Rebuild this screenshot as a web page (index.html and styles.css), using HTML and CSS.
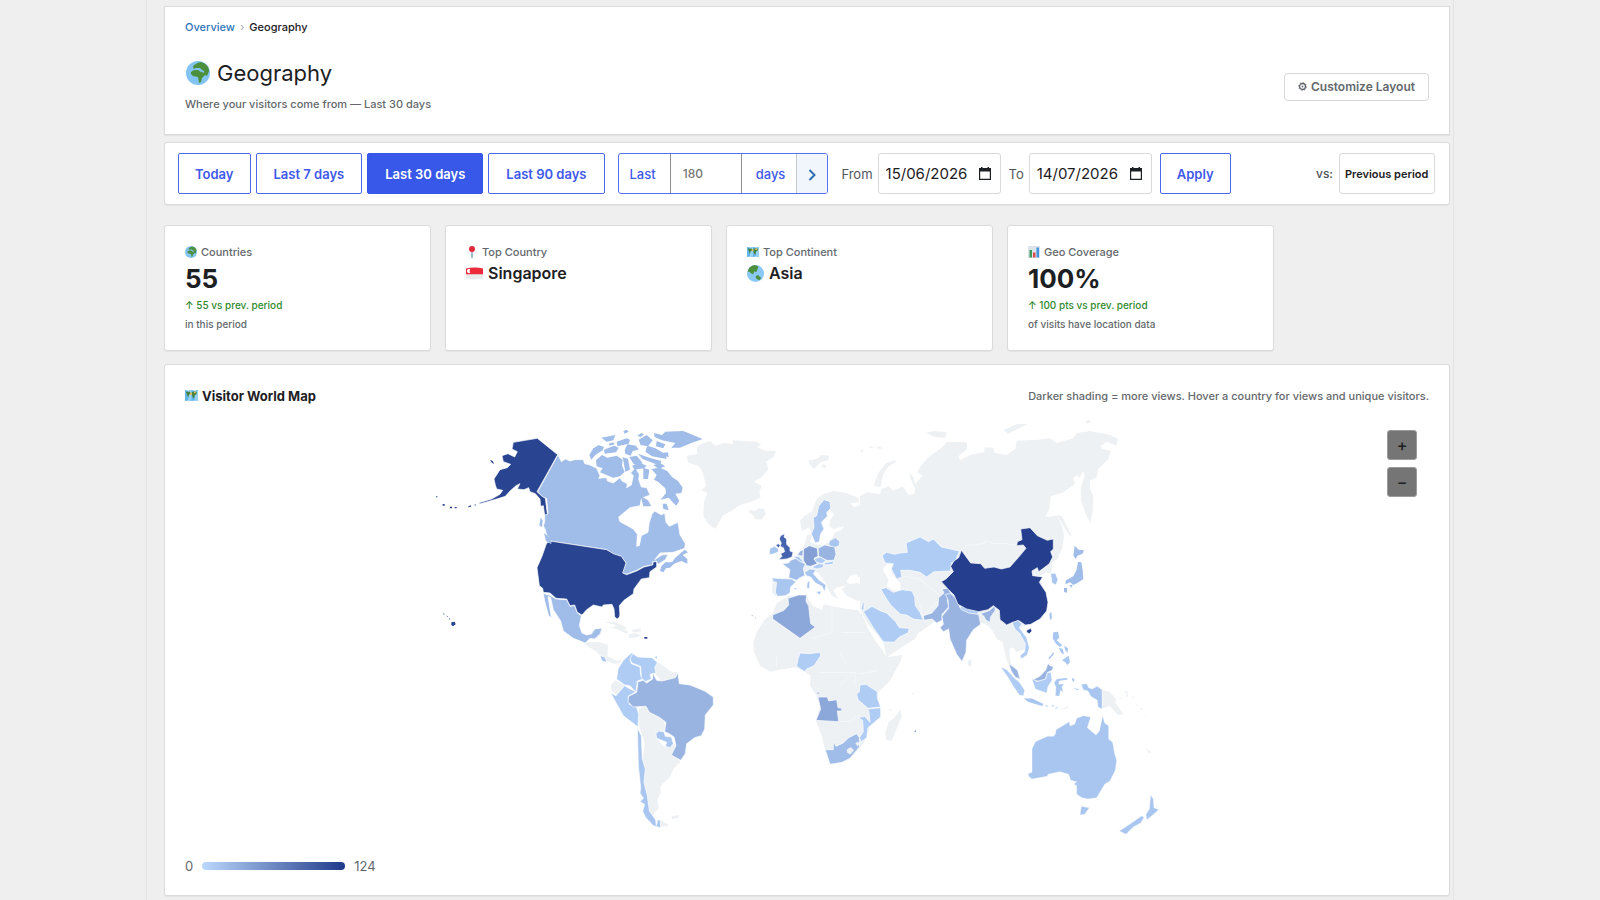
FILE: index.html
```html
<!DOCTYPE html>
<html lang="en">
<head>
<meta charset="utf-8">
<title>Geography</title>
<link rel="stylesheet" href="styles.css">
</head>
<body>
<svg class="sprite" aria-hidden="true">
  <symbol id="globe" viewBox="0 0 24 24"><circle cx="12" cy="12" r="12" fill="#82c4f4"/><path fill="#4c8f3c" d="M11 2l4-1c4 1 8 4 8 9l-2 5-2-1-1-4-2-1-2-2-4 0-1-2zM5 11l3-2 4 0 3 2 4 1 0 2-3 3-1 4-2 1-1-6-5-1-2-2z"/><path fill="#4c8f3c" d="M8 4l2-1 1 3-3 2-1-2z"/></symbol>
  <symbol id="globe-asia" viewBox="0 0 24 24"><circle cx="12" cy="12" r="12" fill="#8ac8f5"/><path fill="#4c8f3c" d="M1 9C2 4 6 1 11 0l5 2-1 4-2 4-3-1-1 4-3-1-2-2zM13 15l3-1 1 2 3 2-2 3-4-1-2-3z"/></symbol>
  <symbol id="map" viewBox="0 0 24 24"><path fill="#5fb4e8" d="M0 2l6 1 6-1 6 1 6-1v20l-6-1-6 1-6-1-6 1z"/><path fill="#96d2f3" d="M6 3l6-1v20l-6-1zM18 3l6-1v20l-6-1z"/><path fill="#47823c" d="M2 5l7 0 2 3-4 3-1 5-2-5zM13 5l9 0-1 5-3 1-1 6-3-2-1-5z"/><path fill="#e6bd4e" d="M9 7l3-1 1 4-3 1zM16 5h4v3h-3z"/></symbol>
  <symbol id="pin" viewBox="0 0 24 24"><path stroke="#7894ab" stroke-width="2.5" d="M12 10v14"/><circle cx="12" cy="6" r="6" fill="#e52a3b"/></symbol>
  <symbol id="flag-sg" viewBox="0 0 24 18"><path fill="#e9eaec" d="M0 2q12-3 24 0v14q-12 3-24 0z"/><path fill="#ec2a3b" d="M0 2q12-3 24 0v8H0z"/><path d="M6 3a3 3 0 1 0 0 5a4 4 0 0 1 0-5" fill="#fff"/></symbol>
  <symbol id="chart" viewBox="0 0 24 24"><path fill="#dde4e9" d="M0 0h24v24H0z"/><path fill="#3d9a58" d="M3 8h5v15H3z"/><path fill="#dd4a50" d="M10 13h5v10h-5z"/><path fill="#4193df" d="M17 3h5v20h-5z"/></symbol>
  <symbol id="gear" viewBox="0 0 12 12"><circle cx="6" cy="6" r="4" fill="none" stroke="currentColor" stroke-width="1.8"/><circle cx="6" cy="6" r="1.200" fill="currentColor"/><circle cx="6" cy="6" r="5.200" fill="none" stroke="currentColor" stroke-width="1.200" stroke-dasharray="1.600 2.400"/></symbol>
  <symbol id="calendar" viewBox="0 0 12 13"><path fill="currentColor" fill-rule="evenodd" d="M2 0h1.500v1h5V0H10v1h2v12H0V1h2zM1.200 4.500v7.300h9.600V4.500z"/></symbol>
  <symbol id="chevron" viewBox="0 0 8 12"><path d="M1.500 1l5 5-5 5" fill="none" stroke="currentColor" stroke-width="2"/></symbol>
</svg>

<main class="page">
  <header class="panel header">
    <nav class="crumbs" aria-label="Breadcrumb"><a href="#">Overview</a><span class="sep">›</span><span>Geography</span></nav>
    <div class="header-row">
      <div>
        <h1><svg class="h1-icon"><use href="#globe"/></svg>Geography</h1>
        <p class="subtitle">Where your visitors come from — Last 30 days</p>
      </div>
      <button class="customize" type="button"><svg class="gear-icon"><use href="#gear"/></svg>Customize Layout</button>
    </div>
  </header>

  <form class="panel toolbar">
    <div class="presets">
      <button type="button" class="btn">Today</button>
      <button type="button" class="btn">Last 7 days</button>
      <button type="button" class="btn active">Last 30 days</button>
      <button type="button" class="btn">Last 90 days</button>
    </div>
    <div class="custom-range">
      <label for="days">Last</label>
      <input id="days" type="text" placeholder="180">
      <span class="unit">days</span>
      <button type="button" aria-label="Go"><svg class="chevron-icon"><use href="#chevron"/></svg></button>
    </div>
    <div class="dates">
      <label for="from">From</label>
      <span class="date"><input id="from" type="text" value="15/06/2026"><svg class="cal-icon"><use href="#calendar"/></svg></span>
      <label for="to">To</label>
      <span class="date"><input id="to" type="text" value="14/07/2026"><svg class="cal-icon"><use href="#calendar"/></svg></span>
    </div>
    <button type="submit" class="btn">Apply</button>
    <div class="compare">
      <label for="vs">vs:</label>
      <select id="vs"><option>Previous period</option></select>
    </div>
  </form>

  <section class="cards">
    <article class="panel card">
      <h2><svg class="label-icon"><use href="#globe"/></svg>Countries</h2>
      <p class="number">55</p>
      <p class="delta">↑ 55 vs prev. period</p>
      <p class="note">in this period</p>
    </article>
    <article class="panel card">
      <h2><svg class="label-icon"><use href="#pin"/></svg>Top Country</h2>
      <p class="name"><svg class="name-icon"><use href="#flag-sg"/></svg>Singapore</p>
    </article>
    <article class="panel card">
      <h2><svg class="label-icon"><use href="#map"/></svg>Top Continent</h2>
      <p class="name"><svg class="name-icon"><use href="#globe-asia"/></svg>Asia</p>
    </article>
    <article class="panel card">
      <h2><svg class="label-icon"><use href="#chart"/></svg>Geo Coverage</h2>
      <p class="number">100%</p>
      <p class="delta">↑ 100 pts vs prev. period</p>
      <p class="note">of visits have location data</p>
    </article>
  </section>

  <section class="panel map-panel">
    <div class="map-head">
      <h2><svg class="title-icon"><use href="#map"/></svg>Visitor World Map</h2>
      <p>Darker shading = more views. Hover a country for views and unique visitors.</p>
    </div>
    <div class="map-wrap">
      <svg class="world" viewBox="185 414 1244 430" role="img" aria-label="World map of visitors">
        <!-- Europe, Greenland and the Atlantic islands -->
        <g transform="translate(690 420) scale(.33333)">
          <g class="none">
            <path d="M20 85L40 72 60 66 78 80 100 72 130 76 128 64 200 68 215 78 200 84 225 95 258 96 250 115 228 128 235 150 215 175 192 188 215 200 208 220 212 236 180 250 150 258 120 278 98 290 76 330 55 316 40 290 42 250 52 222 34 214 48 200 38 160 25 140-5 132-10 110 22 105Z"/>
            <path d="M178 272L195 276 205 268 222 270 228 284 215 302 195 300 190 288 178 282Z"/>
            <path d="M355 125L385 118 392 108 418 110 415 122 392 130 372 150 360 138ZM398 136l12 4-6 8-8-4ZM510 92l12 2-6 8ZM536 84l10-4 4 8ZM560 80l20 8-14 2Z"/>
            <path d="M552 200L556 185 566 160 590 132 615 122 618 128 596 142 580 165 576 180 572 204Z"/>
            <path d="M330 305L345 290 365 280 380 240 400 225 430 216 470 222 505 236 508 250 480 252 492 264 510 258 520 240 550 232 580 222 610 216 640 232 690 220 800 200 800 560 690 640 540 600 525 572 530 545 500 545 470 530 455 510 470 500 440 505 430 515 445 540 425 530 405 490 385 462 375 455 340 460 320 478 315 490 300 500 300 515 285 530 258 532 246 520 248 480 300 478 300 460 290 440 278 434 305 425 325 405 340 385 345 370 350 350 364 344 358 325 336 336Z"/>
          </g>
          <path class="sea" d="M420 272L432 285 420 305 418 322 430 330 462 322 455 334 436 340 430 352 418 368 400 378 372 376 360 366 368 345 376 372 390 365 390 345 400 336 396 310Z"/>
          <path class="sea" d="M470 488L480 470 498 466 506 476 520 462 530 470 524 478 548 492 520 498 500 492 480 496Z"/>
          <path class="sea" d="M582 450L596 432 612 436 612 448 600 455 610 478 622 500 634 496 632 515 612 514 594 500 596 480Z"/>
          <g class="lands">
            <path class="v2" d="M402 242L420 248 422 268 410 280 412 292 394 310 402 330 392 345 388 368 376 372 364 345 372 325 370 296 380 290 386 262Z"/>
            <path class="v2" d="M418 366L436 356 450 368 446 382 430 386 416 378Z"/>
            <path class="v7" d="M272 350L284 344 282 354 290 360 290 376 300 386 300 396 309 400 306 414 290 420 266 422 276 412 272 404 284 398 280 386 270 382 274 372 268 360ZM257 378l8-4 6 6-6 6Z"/>
            <path class="v2" d="M238 400L240 388 254 382 266 390 264 400 240 408Z"/>
            <path class="v6" d="M340 390L358 380 382 388 384 412 372 418 382 434 362 442 350 440 340 424Z"/>
            <path class="v4" d="M384 388L404 378 434 384 438 406 432 424 410 424 386 412Z"/>
            <path class="v4" d="M322 408L330 396 340 392 338 412Z"/>
            <path class="v3" d="M276 434L296 432 302 424 318 418 346 436 340 448 344 470 330 476 320 484 296 476 300 452Z"/>
            <path class="v1" d="M310 412L326 412 342 430 330 428ZM372 420L390 414 408 424 396 434 380 430ZM366 444l20-10 16 2-4 10-20 4ZM402 432l30-6-4 10-24 2Z"/>
            <path class="v2" d="M246 476L258 478 304 480 318 488 302 504 300 522 286 530 262 532 256 520 260 490 250 488Z"/>
            <path class="v2" d="M344 460L360 450 378 452 370 464 388 484 408 498 404 518 396 502 376 492 362 474 348 470ZM376 518l18-2-4 12ZM352 488l8-2-2 24-8-4ZM308 508l14-2-4 6Z"/>
          </g>
        </g>
        <!-- Africa -->
        <g transform="translate(740 500) scale(.33333)">
          <path class="none" d="M110 312L148 290 200 286 206 302 218 320 245 332 252 316 276 322 310 328 355 334 368 350 385 390 402 420 430 458 440 474 488 468 480 490 450 545 415 580 412 610 422 640 420 655 390 680 380 715 362 745 320 785 280 797 268 785 256 755 245 710 228 665 240 620 230 590 210 560 212 530 190 515 165 505 120 512 90 518 60 500 42 460 40 430 50 400 75 360 98 345Z"/>
          <path class="none" d="M480 632L486 650 470 690 455 725 438 722 436 700 446 670 465 655Z"/>
          <path class="borders" d="M276 322V400M306 400h70M70 380l28-16M215 420l60-20M300 460l20 40M240 520h110M345 520v40M355 525l60-10M110 470v36M300 560l40-40M298 668l30 0 30-20"/>
          <g class="lands">
            <path class="v5" d="M144 298L176 288 200 288 198 306 206 322 212 374 226 384 180 418 98 360 98 348 132 334 146 318Z"/>
            <path class="v1" d="M180 462L208 464 240 460 242 470 222 500 200 510 194 518 170 502 174 480Z"/>
            <path class="v5" d="M234 594L262 594 266 606 290 602 294 626 306 628 304 636 292 636 296 668 228 664 242 630Z"/>
            <path class="v1" d="M360 558L378 556 412 578 412 598 422 624 384 628 354 602 350 586 358 578Z"/>
            <path class="v1" d="M384 630L422 626 422 654 384 686 380 716 364 728 358 716 370 698 368 664 354 656 374 652 390 670 388 646Z"/>
            <path class="v3" d="M256 752L280 752 280 728 288 742 310 732 326 716 350 704 358 716 358 744 330 778 306 790 270 796Z"/>
          </g>
          <path class="none" d="M320 752l12-8 10 10-10 12-10-4ZM346 732l8-4 6 8-8 6Z"/>
          <path class="v6" d="M231 582l5-2v5ZM34 350l4-2v4ZM44 356l3-2v4ZM522 698l6-5v6Z"/>
          <path class="none" d="M445 628l12 6-6 2ZM515 580l8 2-4 6Z"/>
        </g>
        <!-- Asia -->
        <g transform="translate(860 410) scale(.33333)">
          <path class="none" d="M0 262L20 250 40 252 60 256 65 240 85 232 100 245 128 232 142 252 150 268 162 266 165 240 150 205 148 192 160 205 166 225 188 200 172 190 180 175 205 145 240 120 262 98 320 100 322 120 295 142 300 154 330 138 372 130 374 115 400 116 404 132 440 138 466 120 470 95 530 92 570 88 590 102 640 88 650 72 690 66 750 78 775 90 768 110 740 98 722 112 728 120 752 125 745 150 715 180 710 205 690 215 690 240 700 260 698 310 690 342 675 310 662 270 664 230 674 200 668 186 660 206 650 198 640 206 645 225 610 250 572 262 568 300 556 325 590 320 606 350 612 380 606 420 592 450 576 458 574 495 560 490 540 500 560 580 540 620 500 650 470 660 500 700 495 720 470 730 458 715 448 720 450 750 462 790 450 780 436 740 428 700 410 690 400 670 385 650 360 640 330 640 200 620 190 635 170 640 140 620 110 600 90 560 60 530 0 530Z"/>
          <path class="none" d="M0 600L0 530 60 530 96 590 132 640 144 655 160 642 182 660 165 690 130 712 80 745 70 700 20 640Z"/>
          <path class="sea" d="M68 482L80 466 100 464 102 480 92 486 104 506 120 520 122 545 100 544 80 530 86 512Z"/>
          <path class="none" d="M198 72l22-6 40 4-6 16-30-2ZM430 64l40-18 34-2-30 16-30 14ZM676 38l10-6 8 6-10 6ZM590 318l16 4 30 60-8-4ZM324 755l10-4v22l-10-4Z"/>
          <path class="borders" d="M300 428L320 410 372 404 376 394 400 404 440 404 470 408M120 500l60 10 60 50M170 560l20 60 50-50"/>
          <g class="lands">
            <path class="v1" d="M66 440L80 430 104 436 120 432 142 430 138 402 180 384 206 398 220 390 244 414 298 426 288 452 274 462 272 486 222 488 200 504 180 490 150 484 122 484 126 504 110 510 94 480 100 464 76 462Z"/>
            <path class="v1" d="M62 540L78 536 100 550 126 542 156 546 164 564 166 590 180 610 190 634 160 630 140 618 122 616 92 588 76 564Z"/>
            <path class="v1" d="M10 608L36 592 62 606 80 612 108 640 118 656 148 658 144 672 118 684 102 700 70 698 40 656Z"/>
            <path class="v1" d="M8 580l4 0v18l-6 8-2-8Z"/>
            <path class="v4" d="M190 620L216 612 234 590 236 566 252 552 246 540 264 538 272 552 284 562 262 572 266 594 246 616 246 634 230 642 216 630 192 634Z"/>
            <path class="v4" d="M256 556L272 554 290 570 300 596 328 610 356 616 362 646 340 662 320 694 318 730 306 758 290 736 270 690 266 660 250 668 240 656 250 646 246 622 266 598 264 572Z"/>
            <path class="v1" d="M300 592L318 594 354 606 354 616 326 612 304 602Z"/>
            <path class="v4" d="M362 614L390 604 404 590 406 604 392 624 390 640 378 634 372 622Z"/>
            <path class="v8" d="M304 424L316 440 332 462 362 464 374 478 402 474 424 480 450 474 478 442 498 418 490 408 470 410 472 398 486 392 482 360 510 356 532 380 562 394 580 390 580 420 572 428 578 444 568 464 550 478 536 488 532 476 516 486 518 500 548 504 538 520 558 550 564 580 560 606 540 630 512 646 496 648 478 636 458 640 440 648 420 632 418 604 400 590 384 602 356 608 320 600 294 586 282 558 264 540 244 518 258 510 280 488 272 472 282 456 296 446ZM500 664l12-6 4 8-8 8-8-4Z"/>
            <path class="v1" d="M456 642L474 634 486 644 478 656 500 686 508 716 502 738 484 750 480 740 494 728 496 704 478 672 466 662Z"/>
            <path class="v2" d="M572 494L586 492 594 512 588 528 576 522Z"/>
          </g>
          <g>
            <path class="v2" d="M568 614l6-6 2 20-6 6Z"/>
            <path class="v3" d="M644 410L656 422 672 424 668 434 652 440 648 450 640 440ZM654 458L664 460 668 484 670 510 652 522 640 528 630 520 616 526 618 514 640 502 650 482ZM612 536l10 2-2 14-8-4ZM628 528l10 0-4 8Z"/>
            <path class="v2" d="M580 670L594 668 598 686 590 694 606 708 600 714 588 704 578 688ZM566 746l16-18-2 10-14 14ZM596 716l12 4 4 16-8-4ZM612 710l12 8-2 14-6-8ZM606 754l20-14 4 20-8 8-6-8Z"/>
          </g>
        </g>
        <!-- South-East Asia and Oceania -->
        <g transform="translate(960 600) scale(.33333)">
          <g class="islands">
            <path class="v1" d="M122 204L140 212 160 234 178 250 194 274 190 290 178 288 160 262 142 232Z"/>
            <path class="v4" d="M148 196L160 204 172 214 180 240 166 234 154 216Z"/>
            <path class="v4" d="M220 242L240 232 258 212 264 194 270 200 280 204 276 214 262 220 256 240 234 246Z"/>
            <path class="v1" d="M216 240L232 248 258 240 262 222 272 220 276 244 264 262 260 282 226 270Z"/>
            <path class="v2" d="M190 298L216 298 250 314 248 322 206 310ZM254 318l12 2-6 4ZM272 320l10-2 0 6ZM284 328l14-6-10 8ZM290 240L322 236 322 242 298 246 296 256 312 254 306 264 310 280 302 274 298 292 286 290 288 264 282 252ZM336 236l8 4-2 10-6-6ZM340 268l20 2-8 4Z"/>
            <path class="v2" d="M364 256L380 254 386 266 396 270 412 262 426 272 426 330 414 324 412 304 392 292 384 276 370 272Z"/>
            <path class="v2" d="M288 392L328 368 330 380 344 376 350 358 370 350 392 354 382 386 408 408 418 396 428 350 434 372 446 380 446 420 458 430 464 464 470 484 466 514 450 546 434 556 410 596 384 600 366 596 350 586 350 560 342 556 350 548 332 544 326 526 300 518 264 526 262 532 216 540 206 532 204 524 216 520 216 450 226 428 262 412 280 412 286 406ZM364 622L388 626 374 646 360 648Z"/>
            <path class="v2" d="M572 588L580 600 582 626 596 632 576 650 560 662 558 646 568 630ZM546 650L552 656 542 672 520 684 498 706 478 696 500 682Z"/>
          </g>
          <path class="none" d="M427 272L450 280 468 300 466 310 490 346 474 348 450 322 427 328ZM480 300l24-8-2-14-10-2 8 10-4 10-18 0ZM516 286l6 10-4 0ZM528 314l8 6-4 2ZM540 326l10 4-4 4ZM556 348l4 6-4 0ZM556 444l16 16-4 4ZM588 390l3 4-3 0ZM302 334l24-14-4 8Z"/>
        </g>
        <!-- Central and South America -->
        <g transform="translate(590 600) scale(.33333)">
          <path class="none" d="M-40 110L-14 130 30 130 54 138 52 170 80 186 92 182 92 192 70 194 40 180 20 158-10 140ZM60 86l24-6 30 18-4 6-30-14ZM116 106l22-4 14 8-20 8-16-2ZM190 200L204 190 240 216 264 222 262 240 214 246 196 224ZM62 260L76 244 104 258 98 274 80 288 66 276ZM146 330L166 320 176 340 220 360 228 394 212 396 200 410 200 420 224 444 246 440 258 432 256 450 246 466 272 488 252 508 240 534 212 560 212 580 202 604 206 628 196 640 188 652 184 680 166 630 162 560 158 480 164 430 148 384ZM246 652l20-4 0 8-20 4ZM208 660l30 20-24 4Z"/>
          <g class="lands">
            <path class="v3" d="M0 112L8 96 36 88 32 104 20 116 4 118Z"/>
            <path class="v2" d="M30 170L44 174 51 190 36 186Z"/>
            <path class="v1" d="M84 210L100 184 124 162 132 164 120 182 124 194 150 204 152 230 160 240 142 246 138 280 120 260 104 258 80 240Z"/>
            <path class="v1" d="M128 164L144 174 186 176 202 190 194 206 198 222 180 226 184 240 166 248 154 236 152 202 126 192 120 180Z"/>
            <path class="v1" d="M62 282L78 290 104 260 120 270 138 278 114 292 118 316 140 324 146 346 144 384 100 350Z"/>
            <path class="v4" d="M116 292L140 280 144 248 160 244 170 252 188 240 188 222 200 244 216 246 256 236 264 222 268 254 300 258 344 276 370 294 370 318 346 348 344 390 334 410 314 416 290 434 286 464 272 484 244 468 258 440 252 414 238 404 224 398 228 370 210 356 178 340 168 322 130 324 114 308Z"/>
            <path class="v2" d="M198 404L206 396 222 398 226 412 244 414 250 434 240 446 226 442 230 430 200 418Z"/>
            <path class="v2" d="M142 386L154 410 157 480 166 510 162 550 172 590 178 636 198 664 210 662 212 686 190 680 166 654 158 636 164 616 150 608 160 598 150 582 152 566 145 500Z"/>
          </g>
          <path class="v8" d="M163 114h9v5h-9Z"/><path class="v2" d="M194 174l7-2-1 7Z"/>
          <path class="sea" d="M196 664l8-8-2 18-4 8Z"/>
        </g>
        <!-- North America -->
        <g transform="translate(420 410) scale(.33333)">
          <g class="lands">
            <path class="v3" d="M414 138L424 158 436 150 450 156 466 152 490 152 494 164 510 168 530 178 540 200 536 208 560 206 562 216 580 222 600 206 606 216 622 224 620 236 634 228 640 200 632 192 646 176 658 196 656 212 664 234 680 236 690 258 664 268 660 290 630 296 596 324 600 338 640 360 652 376 650 412 658 410 664 380 684 370 688 340 696 316 704 306 724 318 734 312 738 340 748 352 774 340 780 378 796 404 794 418 760 430 720 432 704 452 726 438 744 436 736 452 714 466 710 456 698 458 698 468 672 472 650 484 620 496 606 492 618 462 604 442 580 436 560 422 396 397 380 378 376 362 370 350 374 340 374 318 384 314 380 268 368 264 353 248Z"/>
            <path class="v3" d="M370 554L388 558 408 570 440 572 450 592 464 590 472 612 484 620 478 650 486 672 500 678 516 674 524 660 546 658 540 674 524 690 510 688 496 702 460 688 430 666 422 636 400 602 392 566 384 562 394 626 386 620 374 576Z"/>
            <path class="v7b" d="M280 100L352 88 413 137 351 248 366 262 376 268 382 316 374 318 370 290 362 292 360 270 346 254 330 248 326 236 312 242 292 240 300 224 288 230 270 246 256 262 230 270 178 285 178 281 215 270 240 256 248 244 230 240 226 228 222 210 240 182 262 176 272 166 250 158 246 140 264 134 284 144 292 128 276 120Z"/>
            <path class="v7b" d="M380 402L396 397 560 422 580 434 604 442 618 462 608 492 620 497 650 486 672 474 698 468 700 458 710 458 710 474 690 488 688 506 664 510 642 540 640 554 612 574 598 590 600 622 592 630 584 624 582 600 576 586 550 588 546 594 520 588 500 602 486 618 472 610 464 588 450 590 440 570 408 568 390 552 370 550 368 538 358 530 351 476 366 442Z"/>
          </g>
          <g class="v3">
            <path d="M724 472L736 460 756 460 766 446 794 422 804 430 788 438 802 450 802 464 784 456 762 464 750 476 738 478 730 490 720 486ZM362 326l6 8-2 20-8-4ZM372 372l22 18 0 16-16-10Z"/>
            <path d="M508 138L520 118 536 108 552 114 548 124 526 138 514 152ZM528 154L546 138 562 146 590 140 608 152 606 170 614 188 600 202 580 206 560 198 540 190 548 178 530 172ZM544 86L586 78 580 94 560 98ZM552 122l30-12 14 6-8 14-34 4ZM590 98l30-10 10 4-4 12-34 8ZM614 124l8-18 26 4 8 12-18 4-6 14-16-6ZM628 144l22-4 18 22-14 8-14-6ZM656 92l24-14 18 16-14 18-22-4ZM682 110l24 8 30 18 4 14-44-8-20-14ZM654 134l34 12 36 10-4 14-52-20ZM702 72l24 6 10-10 54-2 58 24-34 12-34 14-26 0 12-14-40-8-22-10ZM710 96l26 10-6 12-22-6ZM670 176l18 6-4 28-14 0ZM694 180L720 176 742 186 756 204 774 216 788 236 784 252 766 254 778 276 768 290 746 266 722 272 738 252 736 238 714 218 702 212 710 198ZM662 262l22 12 10 18-24 0ZM728 284l12 0 6 20-16-4ZM608 144l16 6 6 32-14 6ZM636 170l24-8 20 8-8 8-28 4ZM700 168l20-6 16 10-20 8Z"/>
            <path d="M610 66l10-4 6 6-12 6ZM652 80l12-8 8 4-10 8ZM566 104l14-4 4 6-14 4ZM726 132l18-2 2 14-14-2Z"/>
          </g>
          <path class="v7b" d="M210 152l8 4 4 8-6-2ZM48 262h4v3h-4ZM68 285h6v5h-6ZM90 293h6v5h-6ZM104 294h6v4h-6ZM145 292l8-3v4l-8 2ZM162 288l5-2v4ZM68 612l6 3-2 2ZM80 620l4 2-2 2ZM87 627l4 2-2 3ZM94 640l10-2 3 8-8 6-5-4Z"/>
          <path class="none" d="M550 640l30-2 34 14 10 10-30-6-16-12ZM636 662l26-4 0 12-24 0ZM596 618l6 4-2 6Z"/>
        </g>
      </svg>
      <div class="zoom">
        <button type="button" aria-label="Zoom in">+</button>
        <button type="button" aria-label="Zoom out">−</button>
      </div>
    </div>
    <div class="legend"><span>0</span><span class="scale"></span><span>124</span></div>
  </section>
</main>
</body>
</html>
```
FILE: styles.css
```css
* { box-sizing: border-box; }
body {
  margin: 0;
  background: #efefef;
  color: #1d2023;
  font-family: Inter, "Liberation Sans", sans-serif;
  font-size: 11px;
  line-height: 16px;
}
h1, h2, p { margin: 0; }
button, input, select { font: inherit; margin: 0; }
.sprite { position: absolute; width: 0; height: 0; }
.page {
  max-width: 1308px;
  min-height: 100vh;
  margin: 0 auto;
  padding: 6px 3px 3px 17px;
  border: solid #e4e4e5;
  border-width: 0 1px;
}
.panel {
  background: #fff;
  border: 1px solid #dadbdd;
  border-radius: 3px;
  box-shadow: 0 1px 1px rgba(0, 0, 0, .05);
}

.header { padding: 12px 20px 22px; border-radius: 0; }
.crumbs { display: flex; gap: 5px; font-weight: 500; }
.crumbs a { color: #2f74ba; text-decoration: none; }
.sep { color: #b0b3b6; }
.header-row { display: flex; justify-content: space-between; align-items: center; margin-top: 22px; }
h1 { display: flex; align-items: center; gap: 7px; font-size: 22px; line-height: 32px; font-weight: 400; }
.h1-icon { width: 24px; height: 24px; margin-left: 1px; }
.subtitle { margin-top: 7px; color: #64686c; font-weight: 500; }
.customize {
  display: flex; align-items: center; gap: 4px;
  height: 28px; margin-top: 4px; padding: 0 13px;
  color: #64686c; background: #fff;
  border: 1px solid #d6d7d9; border-radius: 4px;
  font-size: 12px; font-weight: 600;
}
.gear-icon { width: 9px; height: 9px; }

.toolbar { display: flex; align-items: center; margin-top: 7px; padding: 10px 14px 10px 13px; font-size: 13px; }
.presets { display: flex; gap: 5px; }
.btn {
  height: 41px; padding: 0 16px;
  color: #4059ea; background: #fff;
  border: 1px solid #4c68ec; border-radius: 2px;
  font-weight: 600;
}
.presets .btn + .btn { padding: 0 17px; }
.btn.active { color: #fff; background: #3858e9; border-color: #3858e9; }
.custom-range {
  display: flex; align-items: stretch; height: 41px; margin-left: 13px;
  border: 1px solid #5570ee; border-radius: 3px; overflow: hidden; color: #4059ea; font-weight: 500;
}
.custom-range label, .unit { display: flex; align-items: center; }
.custom-range label { padding: 0 14px 0 11px; }
.custom-range input { width: 72px; padding: 0 12px; border: solid #8d9197; border-width: 0 1px; font-size: 12px; outline: 0; }
.unit { padding: 0 11px 0 14px; }
.custom-range button { width: 31px; padding: 0; background: #f0f6fc; border: 0; border-left: 1px solid #c4c9d2; color: #2f6db3; }
.chevron-icon { width: 8px; height: 12px; vertical-align: middle; }
.dates { display: flex; align-items: center; margin: 0 8px 0 13px; color: #50545a; }
.dates label + .date { margin-left: 5px; }
.date + label { margin-left: 8px; }
.date {
  display: flex; align-items: center; width: 123px; height: 41px; padding: 0 9px 0 7px;
  border: 1px solid #d8d9db; border-radius: 3px; color: #1d2023;
}
.date input { flex: 1; min-width: 0; padding: 0; border: 0; outline: 0; font-size: 15px; color: inherit; }
.cal-icon { width: 12px; height: 13px; flex: none; }
.compare { display: flex; align-items: center; gap: 6px; margin-left: auto; font-size: 12px; color: #50545a; font-weight: 500; }
.compare select {
  appearance: none; height: 41px; padding: 0 5px;
  background: #fff; border: 1px solid #d8d9db; border-radius: 3px;
  color: #1d2023; font-size: 11px; font-weight: 600;
}

.cards { display: grid; grid-template-columns: repeat(4, minmax(0, 267px)); gap: 14px; margin-top: 20px; }
.card { min-height: 125px; padding: 18px 20px; }
.card h2 { display: flex; align-items: center; gap: 4px; font-size: 11px; line-height: 16px; font-weight: 500; color: #64686c; }
.label-icon { width: 12px; height: 12px; }
.number { margin-top: 4px; font-size: 26px; line-height: 30px; font-weight: 700; }
.delta { margin-top: 3px; font-size: 10px; font-weight: 500; color: #2f8a2d; }
.note { margin-top: 3px; font-size: 10px; font-weight: 500; color: #64686c; }
.name { display: flex; align-items: center; gap: 5px; margin-top: 1px; font-size: 16px; line-height: 24px; font-weight: 600; }
.name-icon { width: 17px; height: 17px; }

.map-panel { margin-top: 13px; padding: 19px 20px 21px; }
.map-head { display: flex; justify-content: space-between; line-height: 22px; }
.map-head h2 { display: flex; align-items: center; gap: 4px; font-size: 13px; font-weight: 700; }
.title-icon { width: 13px; height: 13px; }
.map-head p { padding-top: 1px; color: #64686c; font-weight: 500; }
.map-wrap { position: relative; margin-top: 6px; }
.world { display: block; width: 100%; height: auto; }
.zoom { position: absolute; top: 17px; right: 12px; display: grid; gap: 7px; }
.zoom button {
  width: 30px; height: 30px; padding: 0;
  background: #757575; color: #1d2023; border: 1px solid #9b9b9b; border-radius: 3px;
  font-size: 16px; font-weight: 500;
}
.legend { display: flex; align-items: center; gap: 9px; margin-top: 15px; font-size: 13px; color: #64686c; }
.scale { width: 143px; height: 8px; border-radius: 4px; background: linear-gradient(90deg, #bbd8fc, #1e3a8a); }

.none { fill: #edf1f4; }
.sea { fill: #fff; }
.borders { fill: none; stroke: #f8fafb; stroke-width: 2; }
.lands path { stroke: #fff; stroke-width: 2; stroke-linejoin: round; }
.islands path { stroke: #fff; stroke-width: 1; }
.v1 { fill: #afccf5; }
.v2 { fill: #a9c6f0; }
.v3 { fill: #a0bce8; }
.v4 { fill: #9ab4e2; }
.v5 { fill: #8ca7d9; }
.v6 { fill: #839fd4; }
.v7 { fill: #4664ad; }
.v7b { fill: #294591; }
.v8 { fill: #253f8e; }
```
